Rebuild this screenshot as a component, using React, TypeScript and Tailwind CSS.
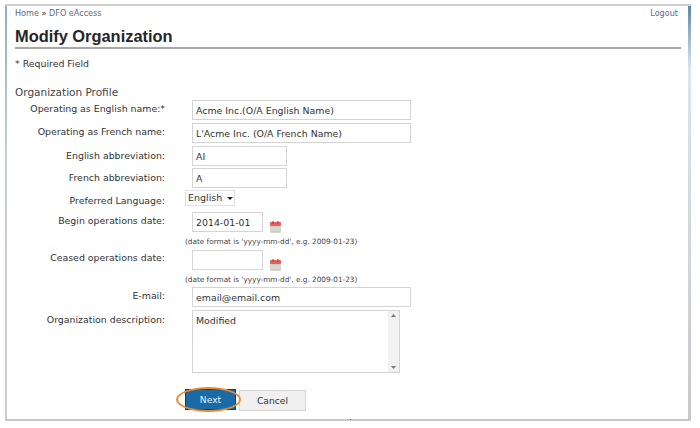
const font = "[font-family:'DejaVu_Sans',Verdana,sans-serif]";

function Cal() {
  return (
    <svg width="11" height="12" viewBox="0 0 11 12" className="ml-[7px] mt-[9px] shrink-0">
      <rect x="0" y="1" width="11" height="11" rx="1" fill="#d6d6cc" />
      <rect x="1" y="5" width="9" height="6" fill="#c3cfc8" />
      <rect x="0" y="1" width="11" height="4" rx="1" fill="#e8605c" />
      <path d="M1 7h9M1 9h9" stroke="#e4e8e2" strokeWidth="0.8" />
      <path d="M3 0v3M8 0v3" stroke="#b8443e" strokeWidth="1.2" />
    </svg>
  );
}

function Row({ label, children, className, labelClass }: { label: string; children: React.ReactNode; className?: string; labelClass: string }) {
  return (
    <div className={"flex items-start " + (className ?? "")}>
      <div className={"w-[160px] text-right text-[9.4px] leading-[14px] text-[#333] " + labelClass}>{label}</div>
      {children}
    </div>
  );
}

function Input({ value, w }: { value: string; w: string }) {
  return (
    <div className={"ml-[27px] h-[20px] border border-[#d4d4d4] bg-white pl-[3px] text-[9.4px] leading-[19px] text-[#333] " + w}>{value}</div>
  );
}

function Hint() {
  return <div className="ml-[180px] mt-[4px] text-[7.3px] leading-[10px] text-[#444]">(date format is 'yyyy-mm-dd', e.g. 2009-01-23)</div>;
}

export default function App() {
  return (
    <div className={"h-[428px] w-[700px] overflow-hidden bg-white pl-[5px] pt-[4px] " + font}>
      <div className="relative flex h-[417px] w-[686px] border-y-2 border-t-[#cfcfcf] border-b-[#c8c8c8]">
        <div className="w-[2px] shrink-0 bg-gradient-to-b from-[#8fb0c8] via-[#c4ced4] via-35% to-[#cfcfcf]" />
        <div className="min-w-0 flex-1 pl-[8px] pr-[7px]">
          <div className="flex justify-between pt-[1px] text-[8.1px] leading-[12px] text-[#5a6b85]">
            <span>Home <span className="text-[#333]">»</span> DFO eAccess</span>
            <span className="mr-[3px]">Logout</span>
          </div>
          <h1 className="mt-[7px] border-b-2 border-[#a8a8a8] text-[16.4px] font-bold leading-[21px] text-[#262626] [font-family:'Liberation_Sans',Arial,sans-serif]">Modify Organization</h1>
          <div className="mt-[9px] text-[9.4px] leading-[12px] text-[#333]">* Required Field</div>
          <div className="mt-[15px] text-[10.5px] leading-[14px] text-[#444]">Organization Profile</div>
          <div className="ml-[-10px]">
            <Row label="Operating as English name:*" className="mt-[1px]" labelClass="pt-[2px]"><Input value="Acme Inc.(O/A English Name)" w="w-[219px]" /></Row>
            <Row label="Operating as French name:" className="mt-[3px]" labelClass="pt-[2px]"><Input value="L'Acme Inc. (O/A French Name)" w="w-[219px]" /></Row>
            <Row label="English abbreviation:" className="mt-[3px]" labelClass="pt-[3px]"><Input value="AI" w="w-[95px]" /></Row>
            <Row label="French abbreviation:" className="mt-[2px]" labelClass="pt-[3px]"><Input value="A" w="w-[95px]" /></Row>
            <Row label="Preferred Language:" className="mt-[2px]" labelClass="pt-[4px]">
              <div className="ml-[20px] flex h-[16px] w-[50px] items-center border border-[#e2e2e2] pl-[2px] text-[9.5px] text-[#333]">
                English
                <svg width="6" height="3" viewBox="0 0 6 3" className="ml-[5px] shrink-0"><path d="M0 0h6L3 3z" fill="#222" /></svg>
              </div>
            </Row>
            <Row label="Begin operations date:" className="mt-[4px]" labelClass="pt-[2px]"><Input value="2014-01-01" w="w-[71px]" /><Cal /></Row>
            <Hint />
            <Row label="Ceased operations date:" className="mt-[3px]" labelClass="pt-[1px]"><Input value="" w="w-[71px]" /><Cal /></Row>
            <Hint />
            <Row label="E-mail:" className="mt-[2px]" labelClass="pt-[2px]"><Input value="email@email.com" w="w-[219px]" /></Row>
            <Row label="Organization description:" className="mt-[3px]" labelClass="pt-[3px]">
              <div className="ml-[27px] flex h-[63px] w-[208px] justify-between border border-[#d4d4d4] text-[9.4px] text-[#333]">
                <span className="pl-[3px] pt-[2px] leading-[16px]">Modified</span>
                <div className="flex w-[11px] flex-col items-center justify-between bg-[#f1f1f1] py-[3px]">
                  <svg width="5" height="3" viewBox="0 0 5 3"><path d="M0 3h5L2.5 0z" fill="#777" /></svg>
                  <svg width="5" height="3" viewBox="0 0 5 3"><path d="M0 0h5L2.5 3z" fill="#777" /></svg>
                </div>
              </div>
            </Row>
            <div className="ml-[180px] mt-[16px] flex items-start gap-[3px]">
              <div className="relative flex h-[21px] w-[51px] items-center justify-center border border-[#333] bg-[#1a6aa8] text-[9.2px] text-[#e8f0f5]">
                Next
                <div className="absolute left-[-10px] top-[-3px] h-[25px] w-[65px] rounded-[50%] border-[2px] border-[#f08a2c]" />
              </div>
              <div className="mt-[1px] flex h-[21px] w-[67px] items-center justify-center border border-[#d4d4d4] bg-[#f0f0f0] text-[9.2px] text-[#333]">Cancel</div>
            </div>
          </div>
        </div>
        <div className="w-[3px] shrink-0 bg-gradient-to-b from-[#5f88aa] via-[#d8e6ee] via-15% to-[#c8c8c8]" />
        <div className="absolute bottom-[-1px] left-[345px] h-[1px] w-[1px] bg-[#a04050]" />
      </div>
    </div>
  );
}
